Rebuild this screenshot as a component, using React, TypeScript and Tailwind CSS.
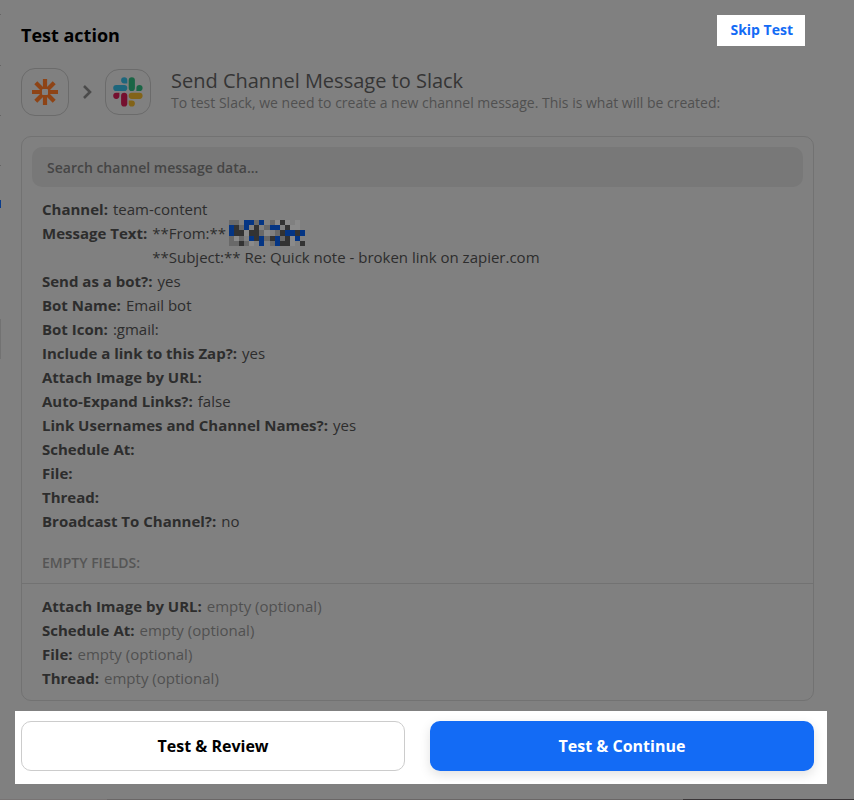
import React, { FC } from "react";

interface Field {
  label: string;
  value?: string;
}

const FIELDS_AFTER_MESSAGE: Field[] = [
  { label: "Send as a bot?:", value: "yes" },
  { label: "Bot Name:", value: "Email bot" },
  { label: "Bot Icon:", value: ":gmail:" },
  { label: "Include a link to this Zap?:", value: "yes" },
  { label: "Attach Image by URL:" },
  { label: "Auto-Expand Links?:", value: "false" },
  { label: "Link Usernames and Channel Names?:", value: "yes" },
  { label: "Schedule At:" },
  { label: "File:" },
  { label: "Thread:" },
  { label: "Broadcast To Channel?:", value: "no" },
];

const EMPTY_FIELDS = ["Attach Image by URL:", "Schedule At:", "File:", "Thread:"];

// one letter per 5px tile: b = blue, k = dark, g = gray, l = light, . = clear
const MOSAIC = [
  "gg.bbgb.glkl.l.",
  "bkgb.k.gbb.kll.",
  "bkklkkgl.gkbbkb",
  "glg.bkbgkbgklb.",
  "ggkgl.b.gbkkl.k",
];

const TILE_COLORS: Record<string, string> = {
  b: "#043584",
  k: "#333333",
  g: "#696969",
  l: "#8a8a8a",
};

const HiddenAddress: FC = () => (
  <svg width="76" height="26" viewBox="0 0 75 25" preserveAspectRatio="none" role="img" aria-label="Hidden address" shapeRendering="crispEdges">
    {MOSAIC.map((row, y) =>
      row.split("").map((tile, x) =>
        TILE_COLORS[tile] ? (
          <rect key={`${x}-${y}`} x={x * 5} y={y * 5} width="5" height="5" fill={TILE_COLORS[tile]} />
        ) : null
      )
    )}
  </svg>
);

const ZapierIcon: FC = () => (
  <svg width="26" height="26" viewBox="0 0 26 26" fill="none">
    <path stroke="#8e4416" strokeWidth="4.2" d="M13 0v26M0 13h26M3.8 3.8l18.4 18.4M22.2 3.8L3.8 22.2" />
    <rect x="10" y="10" width="6" height="6" rx="1" fill="#808080" />
  </svg>
);

const SlackIcon: FC = () => (
  <svg width="30" height="30" viewBox="0 0 30 30">
    <path fill="#1d667c" d="M11.2 0.2a3.1 3.1 0 0 0 0 6.2h3.1V3.3a3.1 3.1 0 0 0-3.1-3.1zM11.2 7.9H3.3a3.1 3.1 0 0 0 0 6.2h7.9a3.1 3.1 0 0 0 0-6.2z" />
    <path fill="#1a6545" d="M29.6 11a3.1 3.1 0 0 0-6.2 0v3.1h3.1a3.1 3.1 0 0 0 3.1-3.1zM21.9 11V3.3a3.1 3.1 0 0 0-6.2 0V11a3.1 3.1 0 0 0 6.2 0z" />
    <path fill="#826318" d="M18.8 29.6a3.1 3.1 0 0 0 0-6.2h-3.1v3.1a3.1 3.1 0 0 0 3.1 3.1zM18.8 21.9h7.7a3.1 3.1 0 0 0 0-6.2h-7.7a3.1 3.1 0 0 0 0 6.2z" />
    <path fill="#75102f" d="M0.2 18.8a3.1 3.1 0 0 0 6.2 0v-3.1H3.3a3.1 3.1 0 0 0-3.1 3.1zM8.1 18.8v7.7a3.1 3.1 0 0 0 6.2 0v-7.7a3.1 3.1 0 0 0-6.2 0z" />
  </svg>
);

// edge of the step list that shows beside the panel
const StepListEdge: FC = () => (
  <div aria-hidden="true" className="absolute top-0 left-0 flex w-px flex-col pt-3.5">
    <div className="mb-[50px] h-px bg-[#666666]" />
    <div className="mb-[49px] h-px bg-[#666666]" />
    <div className="mb-[49px] h-px bg-[#666666]" />
    <div className="mb-[34px] h-px bg-[#666666]" />
    <div className="mb-[111px] h-2 bg-[#093c8c]" />
    <div className="h-10 bg-[#727272]" />
  </div>
);

const FieldRow: FC<{ field: Field; muted?: boolean }> = ({ field, muted }) => (
  <div className="flex gap-[5px]">
    <dt className="font-bold">{field.label}</dt>
    <dd className={muted ? "text-[#505050]" : ""}>{field.value}</dd>
  </div>
);

export default function App() {
  return (
    <main className="relative flex min-h-screen flex-col bg-[#808080] pt-[15px] font-['Open_Sans',sans-serif] text-[#2d2d2d]">
      <StepListEdge />
      <header className="flex items-start justify-between pr-[49px] pl-[21px]">
        <h1 className="pt-1.5 text-lg leading-7 font-bold text-black">Test action</h1>
        <button type="button" className="h-[31px] bg-white pr-3 pb-0.5 pl-[13px] text-sm font-bold text-[#136bf5]">
          Skip Test
        </button>
      </header>

      <section className="mt-[19px] flex items-center pr-10 pl-[21px]">
        <div className="flex size-12 shrink-0 items-center justify-center rounded-[14px] border border-[#6b6b6b]">
          <ZapierIcon />
        </div>
        <svg width="36" height="16" viewBox="0 0 36 16" fill="none" stroke="#4b4b4b" strokeWidth="2.6" className="shrink-0">
          <path d="M15 2l6 6-6 6" />
        </svg>
        <div className="flex size-[46px] shrink-0 items-center justify-center rounded-[14px] border border-[#6b6b6b]">
          <SlackIcon />
        </div>
        <div className="ml-5 pb-0.5">
          <h2 className="text-xl leading-6 text-[#353535]">Send Channel Message to Slack</h2>
          <p className="text-sm leading-5 text-[#505050]">
            To test Slack, we need to create a new channel message. This is what will be created:
          </p>
        </div>
      </section>

      <section className="mt-5 mr-10 ml-[21px] rounded-[10px] border border-[#727272]">
        <div className="p-2.5">
          <input
            type="text"
            aria-label="Search channel message data"
            placeholder="Search channel message data..."
            className="block h-10 w-full rounded-[10px] bg-[#787878] px-[15px] text-sm font-semibold placeholder:text-[#454545]"
          />
        </div>
        <dl className="px-5 text-[15px] leading-6">
          <FieldRow field={{ label: "Channel:", value: "team-content" }} />
          <div className="flex gap-[5px]">
            <dt className="font-bold">Message Text:</dt>
            <dd>
              <div className="flex h-6 items-center gap-[3px]">
                **From:** <HiddenAddress />
              </div>
              <div>**Subject:** Re: Quick note - broken link on zapier.com</div>
            </dd>
          </div>
          {FIELDS_AFTER_MESSAGE.map((field) => (
            <FieldRow key={field.label} field={field} />
          ))}
        </dl>
        <h3 className="mt-[18px] border-b border-[#727272] px-5 pb-2 text-sm leading-6 font-semibold text-[#555555]">EMPTY FIELDS:</h3>
        <dl className="px-5 pt-2.5 pb-2.5 text-[15px] leading-6">
          {EMPTY_FIELDS.map((label) => (
            <FieldRow key={label} field={{ label, value: "empty (optional)" }} muted />
          ))}
        </dl>
      </section>

      <footer className="mt-2.5 mr-[27px] ml-[15px] grid grid-cols-2 gap-[25px] bg-white pt-2.5 pr-[13px] pb-[13px] pl-1.5 text-base font-bold">
        <button type="button" className="h-[50px] rounded-[10px] border border-[#cccccc] text-black">
          Test &amp; Review
        </button>
        <button type="button" className="h-[50px] rounded-[10px] bg-[#136bf5] text-white shadow-[0_4px_12px_rgba(0,0,0,0.12)]">
          Test &amp; Continue
        </button>
      </footer>

      <div aria-hidden="true" className="mt-auto flex h-px">
        <div className="w-1/8 bg-[#787474]" />
        <div className="flex-1 bg-[#6a6767]" />
        <div className="w-1/5 bg-[#3a3638]" />
      </div>
    </main>
  );
}
